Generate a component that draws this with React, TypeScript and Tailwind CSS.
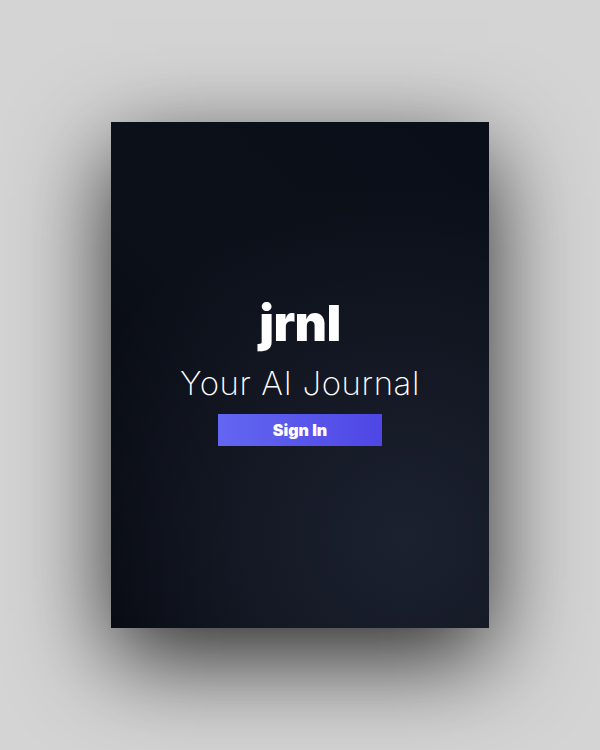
import React from "react";

export default function App() {
  return (
    <div className="w-[600px] h-[750px] bg-[#d4d4d4] flex items-center justify-center font-['Inter','Noto_Sans',sans-serif]">
      <div className="w-[378px] h-[506px] flex flex-col items-center justify-center shadow-[0_30px_90px_rgba(0,0,0,0.8)] bg-[radial-gradient(circle_at_78%_82%,#1c2130_0%,#151925_30%,rgba(11,15,25,0)_70%),linear-gradient(45deg,#04070e_0%,#0c1019_50%,#0a0e18_100%)]">
        <div className="text-white text-[50px] leading-none font-black tracking-[-0.5px] mt-[-6px]">
          jrnl
        </div>
        <div className="text-white text-[33px] leading-none font-extralight tracking-[0.6px] mt-[19px]">
          Your AI Journal
        </div>
        <button className="mt-[14px] w-[164px] h-[32px] bg-gradient-to-r from-[#6366f1] to-[#4f46e5] text-white text-[16px] font-black">
          Sign In
        </button>
      </div>
    </div>
  );
}
